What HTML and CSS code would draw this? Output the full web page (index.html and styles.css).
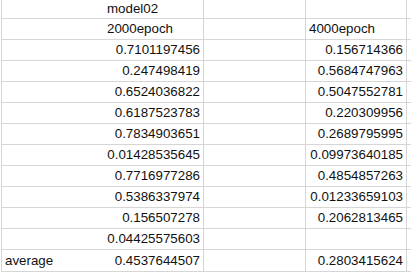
FILE: index.html
```html
<!DOCTYPE html>
<html>
<head>
<meta charset="utf-8">
<link rel="stylesheet" href="styles.css">
</head>
<body>
<div class="sheet">
  <div class="row first"><div class="cell a"></div><div class="cell b txt">model02</div><div class="cell c"></div><div class="cell d"></div><div class="cell e"></div></div>
  <div class="row"><div class="cell a"></div><div class="cell b txt">2000epoch</div><div class="cell c"></div><div class="cell d txt">4000epoch</div><div class="cell e"></div></div>
  <div class="row"><div class="cell a"></div><div class="cell b num">0.7101197456</div><div class="cell c"></div><div class="cell d num">0.156714366</div><div class="cell e"></div></div>
  <div class="row"><div class="cell a"></div><div class="cell b num">0.247498419</div><div class="cell c"></div><div class="cell d num">0.5684747963</div><div class="cell e"></div></div>
  <div class="row"><div class="cell a"></div><div class="cell b num">0.6524036822</div><div class="cell c"></div><div class="cell d num">0.5047552781</div><div class="cell e"></div></div>
  <div class="row"><div class="cell a"></div><div class="cell b num">0.6187523783</div><div class="cell c"></div><div class="cell d num">0.220309956</div><div class="cell e"></div></div>
  <div class="row"><div class="cell a"></div><div class="cell b num">0.7834903651</div><div class="cell c"></div><div class="cell d num">0.2689795995</div><div class="cell e"></div></div>
  <div class="row"><div class="cell a"></div><div class="cell b num">0.01428535645</div><div class="cell c"></div><div class="cell d num">0.09973640185</div><div class="cell e"></div></div>
  <div class="row"><div class="cell a"></div><div class="cell b num">0.7716977286</div><div class="cell c"></div><div class="cell d num">0.4854857263</div><div class="cell e"></div></div>
  <div class="row"><div class="cell a"></div><div class="cell b num">0.5386337974</div><div class="cell c"></div><div class="cell d num">0.01233659103</div><div class="cell e"></div></div>
  <div class="row"><div class="cell a"></div><div class="cell b num">0.156507278</div><div class="cell c"></div><div class="cell d num">0.2062813465</div><div class="cell e"></div></div>
  <div class="row"><div class="cell a"></div><div class="cell b num">0.04425575603</div><div class="cell c"></div><div class="cell d num"></div><div class="cell e"></div></div>
  <div class="row last"><div class="cell a txt">average</div><div class="cell b num">0.4537644507</div><div class="cell c"></div><div class="cell d num">0.2803415624</div><div class="cell e"></div></div>
</div>
</body>
</html>
```

FILE: styles.css
```css
html, body {
  margin: 0;
  padding: 0;
  background: #ffffff;
  overflow: hidden;
}
.sheet {
  margin-left: 1px;
  font-family: "Liberation Sans", Arial, sans-serif;
  font-size: 13.33px;
  color: #111111;
}
.row {
  display: flex;
  height: 21px;
  box-sizing: border-box;
  border-bottom: 1px solid #d6d6d6;
  line-height: 20px;
}
.row.first {
  height: 19px;
  line-height: 18px;
}
.row.last {
  height: 22px;
  line-height: 21px;
}
.cell {
  box-sizing: border-box;
  white-space: nowrap;
  overflow: hidden;
}
.a {
  width: 103px;
  border-left: 1px solid #d6d6d6;
  padding-left: 3px;
}
.b {
  width: 100px;
  border-right: 1px solid #d6d6d6;
}
.c {
  width: 102px;
  border-right: 1px solid #d6d6d6;
}
.d {
  width: 101px;
  border-right: 1px solid #d6d6d6;
}
.e {
  flex: 1;
}
.txt {
  text-align: left;
  padding-left: 3px;
}
.num {
  text-align: right;
  padding-right: 3px;
}
```
